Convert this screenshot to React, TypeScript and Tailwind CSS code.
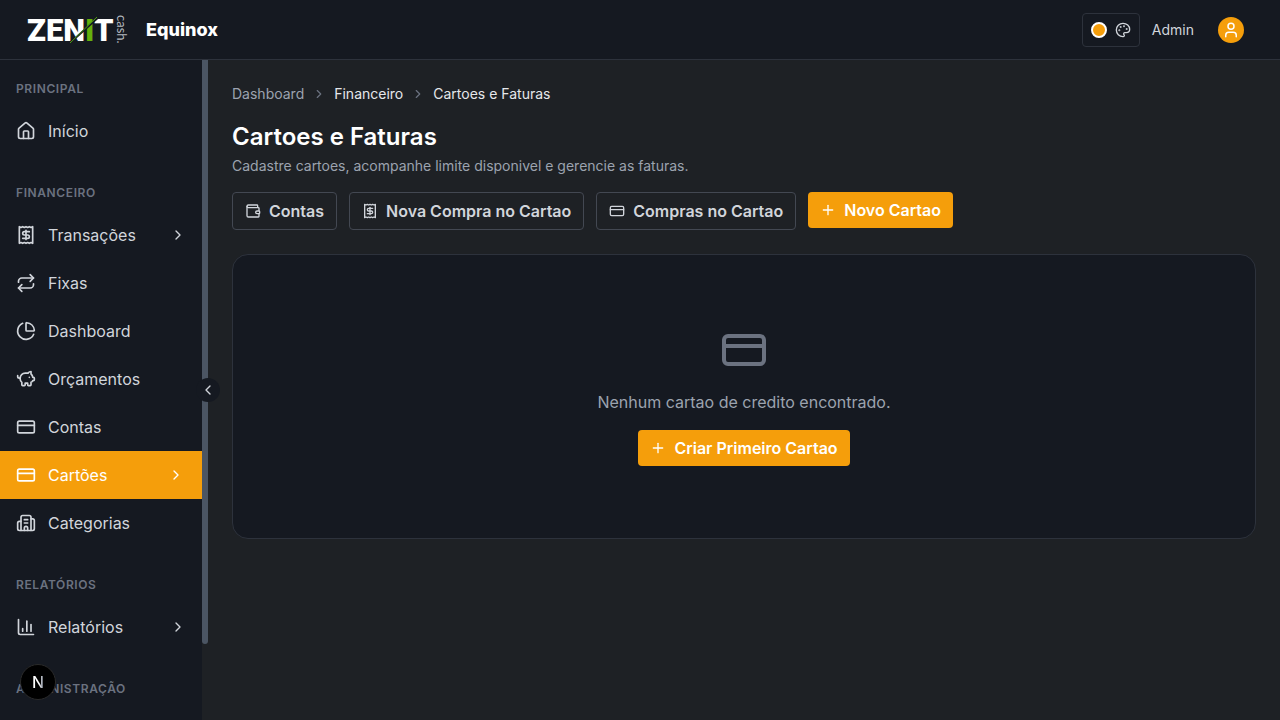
import { Fragment, useState } from "react";
import {
  Building2,
  ChartColumn,
  ChartPie,
  ChevronLeft,
  ChevronRight,
  CreditCard,
  House,
  type LucideIcon,
  Palette,
  PiggyBank,
  Plus,
  Receipt,
  Repeat,
  User,
  Wallet,
} from "lucide-react";

interface NavItem {
  label: string;
  icon: LucideIcon;
  expandable?: boolean;
}

interface NavSection {
  title: string;
  items: NavItem[];
}

const SECTIONS: NavSection[] = [
  { title: "Principal", items: [{ label: "Início", icon: House }] },
  {
    title: "Financeiro",
    items: [
      { label: "Transações", icon: Receipt, expandable: true },
      { label: "Fixas", icon: Repeat },
      { label: "Dashboard", icon: ChartPie },
      { label: "Orçamentos", icon: PiggyBank },
      { label: "Contas", icon: CreditCard },
      { label: "Cartões", icon: CreditCard, expandable: true },
      { label: "Categorias", icon: Building2 },
    ],
  },
  { title: "Relatórios", items: [{ label: "Relatórios", icon: ChartColumn, expandable: true }] },
  { title: "Administração", items: [] },
];

const CRUMBS = ["Dashboard", "Financeiro", "Cartoes e Faturas"];

const ACTIONS: NavItem[] = [
  { label: "Contas", icon: Wallet },
  { label: "Nova Compra no Cartao", icon: Receipt },
  { label: "Compras no Cartao", icon: CreditCard },
];

/** Wordmark: heavy white letters, a green "I" and a slash that cuts across the "N". */
function Logo() {
  return (
    <svg width="108" height="44" viewBox="0 0 108 44" role="img" aria-label="Zenit cash">
      <text x="3" y="33" fontFamily="Roboto, sans-serif" fontWeight="900" fontSize="31" fill="#fff">
        ZEN<tspan fill="#65b00c">I</tspan>T
      </text>
      <path d="M47 34 77 7" stroke="#151921" strokeWidth="2" />
      <path d="M46 35 73 9" stroke="#4c9a10" strokeWidth="1" />
      <text
        transform="translate(93 7) rotate(90)"
        fontFamily="Lato, sans-serif"
        fontSize="13"
        fill="#b4b8bf"
      >
        cash.
      </text>
    </svg>
  );
}

function Header() {
  return (
    <header className="flex h-[60px] flex-none items-center justify-between border-b border-[#2d323c] bg-[#151921] pr-9 pl-6">
      <div className="flex items-center gap-3.5">
        <Logo />
        <span className="text-lg font-extrabold text-white">Equinox</span>
      </div>
      <div className="flex items-center text-[#d1d5db]">
        <button
          aria-label="Tema"
          className="flex items-center gap-2 rounded border border-[#2d323c] p-2"
        >
          <span className="size-4 rounded-full border-2 border-white bg-[#f59e0b]" />
          <Palette size={16} />
        </button>
        <span className="ml-3 text-sm">Admin</span>
        <button
          aria-label="Perfil"
          className="ml-6 grid size-[26px] place-items-center rounded-full bg-[#f59e0b] text-white"
        >
          <User size={18} />
        </button>
      </div>
    </header>
  );
}

function Sidebar() {
  const [active, setActive] = useState("Cartões");
  return (
    <aside className="relative flex w-52 flex-none">
      <nav className="flex-1 overflow-hidden bg-[#151921] pt-[21px]">
        {SECTIONS.map((section) => (
          <div key={section.title} className="mb-[30px]">
            <h3 className="mb-2.5 px-4 text-xs font-semibold tracking-wider text-[#6b7280] uppercase">
              {section.title}
            </h3>
            {section.items.map(({ label, icon: Icon, expandable }) => (
              <button
                key={label}
                onClick={() => setActive(label)}
                className={`flex h-12 w-full items-center gap-3 px-4 text-left ${
                  label === active
                    ? "border-r-2 border-[#f59e0b] bg-[#f59e0b] text-white"
                    : "text-[#d1d5db]"
                }`}
              >
                <Icon size={20} />
                <span className="flex-1">{label}</span>
                {expandable && <ChevronRight size={16} />}
              </button>
            ))}
          </div>
        ))}
      </nav>
      {/* scroll track and thumb */}
      <div className="w-1.5 bg-[#1e2125]">
        <div className="h-[88.5%] rounded-b-full bg-[#4b5563]" />
      </div>
      <button
        aria-label="Recolher menu"
        className="absolute top-1/2 -right-3 grid size-6 -translate-y-1/2 place-items-center rounded-full bg-[#151921] text-[#d1d5db]"
      >
        <ChevronLeft size={16} />
      </button>
    </aside>
  );
}

function PrimaryButton({ label }: { label: string }) {
  return (
    <button className="flex items-center gap-2 rounded bg-[#f59e0b] px-3 py-1.5 font-semibold text-white">
      <Plus size={16} />
      {label}
    </button>
  );
}

export default function App() {
  return (
    <div className="flex h-screen flex-col overflow-hidden bg-[#1e2125] font-['Inter',sans-serif]">
      <Header />
      <div className="flex min-h-0 flex-1">
        <Sidebar />
        <main className="min-w-0 flex-1 overflow-hidden p-6">
          <nav className="flex items-center gap-2 text-sm text-[#e5e7eb]">
            {CRUMBS.map((crumb, i) => (
              <Fragment key={crumb}>
                {i > 0 && <ChevronRight size={14} className="text-[#6b7280]" />}
                <a href="#" className={i === 0 ? "text-[#9ca3af]" : ""}>
                  {crumb}
                </a>
              </Fragment>
            ))}
          </nav>

          <h1 className="mt-4 text-2xl leading-[34px] font-semibold text-white">Cartoes e Faturas</h1>
          <p className="mt-0.5 text-sm text-[#9ca3af]">
            Cadastre cartoes, acompanhe limite disponivel e gerencie as faturas.
          </p>

          <div className="mt-4 flex flex-wrap items-start gap-3">
            {ACTIONS.map(({ label, icon: Icon }) => (
              <button
                key={label}
                className="flex items-center gap-2 rounded border border-[#434852] px-3 py-1.5 font-semibold text-[#d1d5db]"
              >
                <Icon size={16} />
                {label}
              </button>
            ))}
            <PrimaryButton label="Novo Cartao" />
          </div>

          <section className="mt-6 flex flex-col items-center gap-4 rounded-2xl border border-[#2d323c] bg-[#151921] px-6 pt-[71px] pb-[72px]">
            <CreditCard size={48} className="text-[#6b7280]" />
            <p className="text-[#9ca3af]">Nenhum cartao de credito encontrado.</p>
            <PrimaryButton label="Criar Primeiro Cartao" />
          </section>
        </main>
      </div>

      <button
        aria-label="Next.js"
        className="fixed bottom-5 left-5 grid size-9 place-items-center rounded-full border border-[#2a2a2a] bg-black font-medium"
      >
        <span className="bg-linear-to-r from-white from-60% to-gray-500 bg-clip-text text-transparent">
          N
        </span>
      </button>
    </div>
  );
}
